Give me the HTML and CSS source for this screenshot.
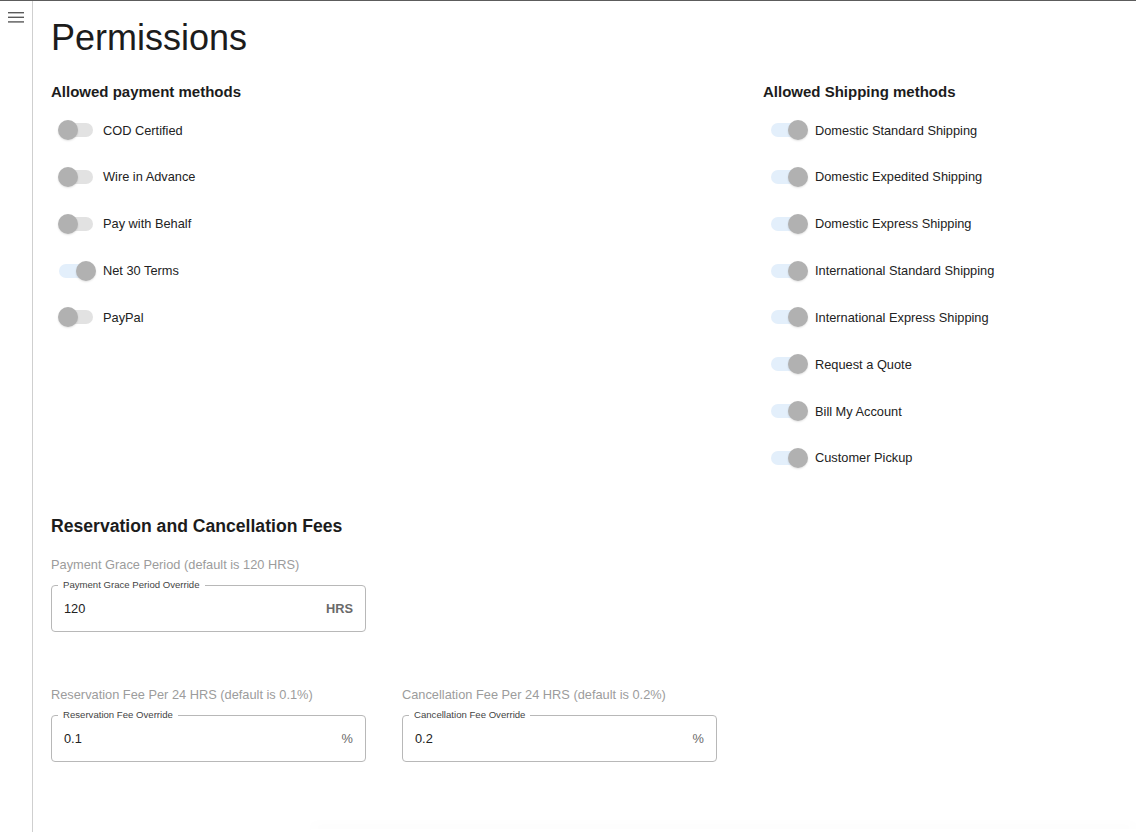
FILE: index.html
```html
<!DOCTYPE html>
<html lang="en">

<head>
    <meta charset="UTF-8">
    <meta name="viewport" content="width=device-width, initial-scale=1.0">
    <title>Permissions</title>
    <link rel="stylesheet" href="styles.css">
</head>
<body>
<div class="page">
    <aside class="sidebar">
        <svg class="menu-icon" width="16" height="11" viewBox="0 0 16 11">
            <rect x="0" y="0" width="16" height="1.4" fill="#5a5a5a"/>
            <rect x="0" y="4.6" width="16" height="1.4" fill="#5a5a5a"/>
            <rect x="0" y="9.2" width="16" height="1.4" fill="#5a5a5a"/>
        </svg>
    </aside>

    <main class="main">
        <h1 class="title">Permissions</h1>

        <div class="methods">
            <div class="col">
                <h2 class="sub">Allowed payment methods</h2>
                <div class="list">
                    <label class="row"><span class="switch"><span class="track"></span><span class="thumb"></span></span>COD Certified</label>
                    <label class="row"><span class="switch"><span class="track"></span><span class="thumb"></span></span>Wire in Advance</label>
                    <label class="row"><span class="switch"><span class="track"></span><span class="thumb"></span></span>Pay with Behalf</label>
                    <label class="row"><span class="switch on"><span class="track"></span><span class="thumb"></span></span>Net 30 Terms</label>
                    <label class="row"><span class="switch"><span class="track"></span><span class="thumb"></span></span>PayPal</label>
                </div>
            </div>
            <div class="col">
                <h2 class="sub">Allowed Shipping methods</h2>
                <div class="list">
                    <label class="row"><span class="switch on"><span class="track"></span><span class="thumb"></span></span>Domestic Standard Shipping</label>
                    <label class="row"><span class="switch on"><span class="track"></span><span class="thumb"></span></span>Domestic Expedited Shipping</label>
                    <label class="row"><span class="switch on"><span class="track"></span><span class="thumb"></span></span>Domestic Express Shipping</label>
                    <label class="row"><span class="switch on"><span class="track"></span><span class="thumb"></span></span>International Standard Shipping</label>
                    <label class="row"><span class="switch on"><span class="track"></span><span class="thumb"></span></span>International Express Shipping</label>
                    <label class="row"><span class="switch on"><span class="track"></span><span class="thumb"></span></span>Request a Quote</label>
                    <label class="row"><span class="switch on"><span class="track"></span><span class="thumb"></span></span>Bill My Account</label>
                    <label class="row"><span class="switch on"><span class="track"></span><span class="thumb"></span></span>Customer Pickup</label>
                </div>
            </div>
        </div>

        <section class="fees">
            <h2 class="fees-title">Reservation and Cancellation Fees</h2>

            <div class="fee">
                <div class="hint">Payment Grace Period (default is 120 HRS)</div>
                <div class="field">
                    <span class="field-label">Payment Grace Period Override</span>
                    <span class="value">120</span>
                    <span class="unit bold">HRS</span>
                </div>
            </div>

            <div class="fee-pair">
                <div class="fee">
                    <div class="hint">Reservation Fee Per 24 HRS (default is 0.1%)</div>
                    <div class="field">
                        <span class="field-label">Reservation Fee Override</span>
                        <span class="value">0.1</span>
                        <span class="unit">%</span>
                    </div>
                </div>
                <div class="fee">
                    <div class="hint">Cancellation Fee Per 24 HRS (default is 0.2%)</div>
                    <div class="field">
                        <span class="field-label">Cancellation Fee Override</span>
                        <span class="value">0.2</span>
                        <span class="unit">%</span>
                    </div>
                </div>
            </div>
        </section>

        <div class="sheet"></div>
    </main>
</div>
</body>

</html>
```

FILE: styles.css
```css
*{
    box-sizing:border-box;
}
html, body{
    margin:0;
    padding:0;
    height:100%;
}
body{
    font-family:"Liberation Sans", Arial, sans-serif;
    color:#222;
    background:#fff;
    overflow:hidden;
}
.page{
    display:flex;
    height:100vh;
    border-top:1px solid #5c5c5c;
}
.sidebar{
    width:33px;
    flex:none;
    border-right:1px solid #cfcfcf;
    padding:11px 0 0 8px;
}
.menu-icon{
    display:block;
}
.main{
    flex:1;
    display:flex;
    flex-direction:column;
    padding:16px 18px 0 18px;
    min-width:0;
}
.title{
    margin:0 0 24px 0;
    font-size:36px;
    line-height:42px;
    font-weight:400;
    color:#1c1c1c;
}
.methods{
    display:grid;
    grid-template-columns:712px 1fr;
}
.sub{
    margin:0 0 10px 0;
    font-size:15px;
    line-height:18px;
    font-weight:700;
    color:#1c1c1c;
}
.list{
    display:flex;
    flex-direction:column;
    gap:8.85px;
    margin-left:-4px;
}
.row{
    display:flex;
    align-items:center;
    height:38px;
    font-size:12.8px;
    color:#222;
}
.switch{
    position:relative;
    width:56px;
    height:20px;
    flex:none;
}
.track{
    position:absolute;
    left:12px;
    top:3px;
    width:34px;
    height:14px;
    border-radius:7px;
    background:#e2e2e2;
}
.thumb{
    position:absolute;
    left:11px;
    top:0;
    width:20px;
    height:20px;
    border-radius:50%;
    background:#b1b1b1;
    box-shadow:0 1px 2px rgba(0,0,0,0.12);
}
.switch.on .track{
    background:#e3effb;
}
.switch.on .thumb{
    left:29px;
}
.fees{
    margin-top:39.5px;
}
.fees-title{
    margin:0 0 19.6px 0;
    font-size:17.6px;
    line-height:21px;
    font-weight:700;
    color:#1c1c1c;
}
.fee-pair{
    display:flex;
    gap:36px;
    margin-top:55px;
}
.hint{
    font-size:12.8px;
    line-height:16px;
    color:#9c9c9c;
    margin-bottom:12px;
}
.field{
    position:relative;
    width:315px;
    height:47px;
    border:1px solid #b8b8b8;
    border-radius:4px;
    display:flex;
    align-items:center;
    justify-content:space-between;
    padding:0 12px 0 12px;
    font-size:12.8px;
}
.field-label{
    position:absolute;
    top:-7px;
    left:6px;
    padding:0 5px;
    background:#fff;
    font-size:9.6px;
    line-height:12px;
    color:#444;
}
.value{
    color:#222;
}
.unit{
    color:#6a6a6a;
}
.unit.bold{
    font-weight:700;
}
.sheet{
    margin-top:auto;
    margin-left:260px;
    margin-right:-18px;
    height:3px;
    box-shadow:0 -3px 12px rgba(0,0,0,0.045);
}
```
